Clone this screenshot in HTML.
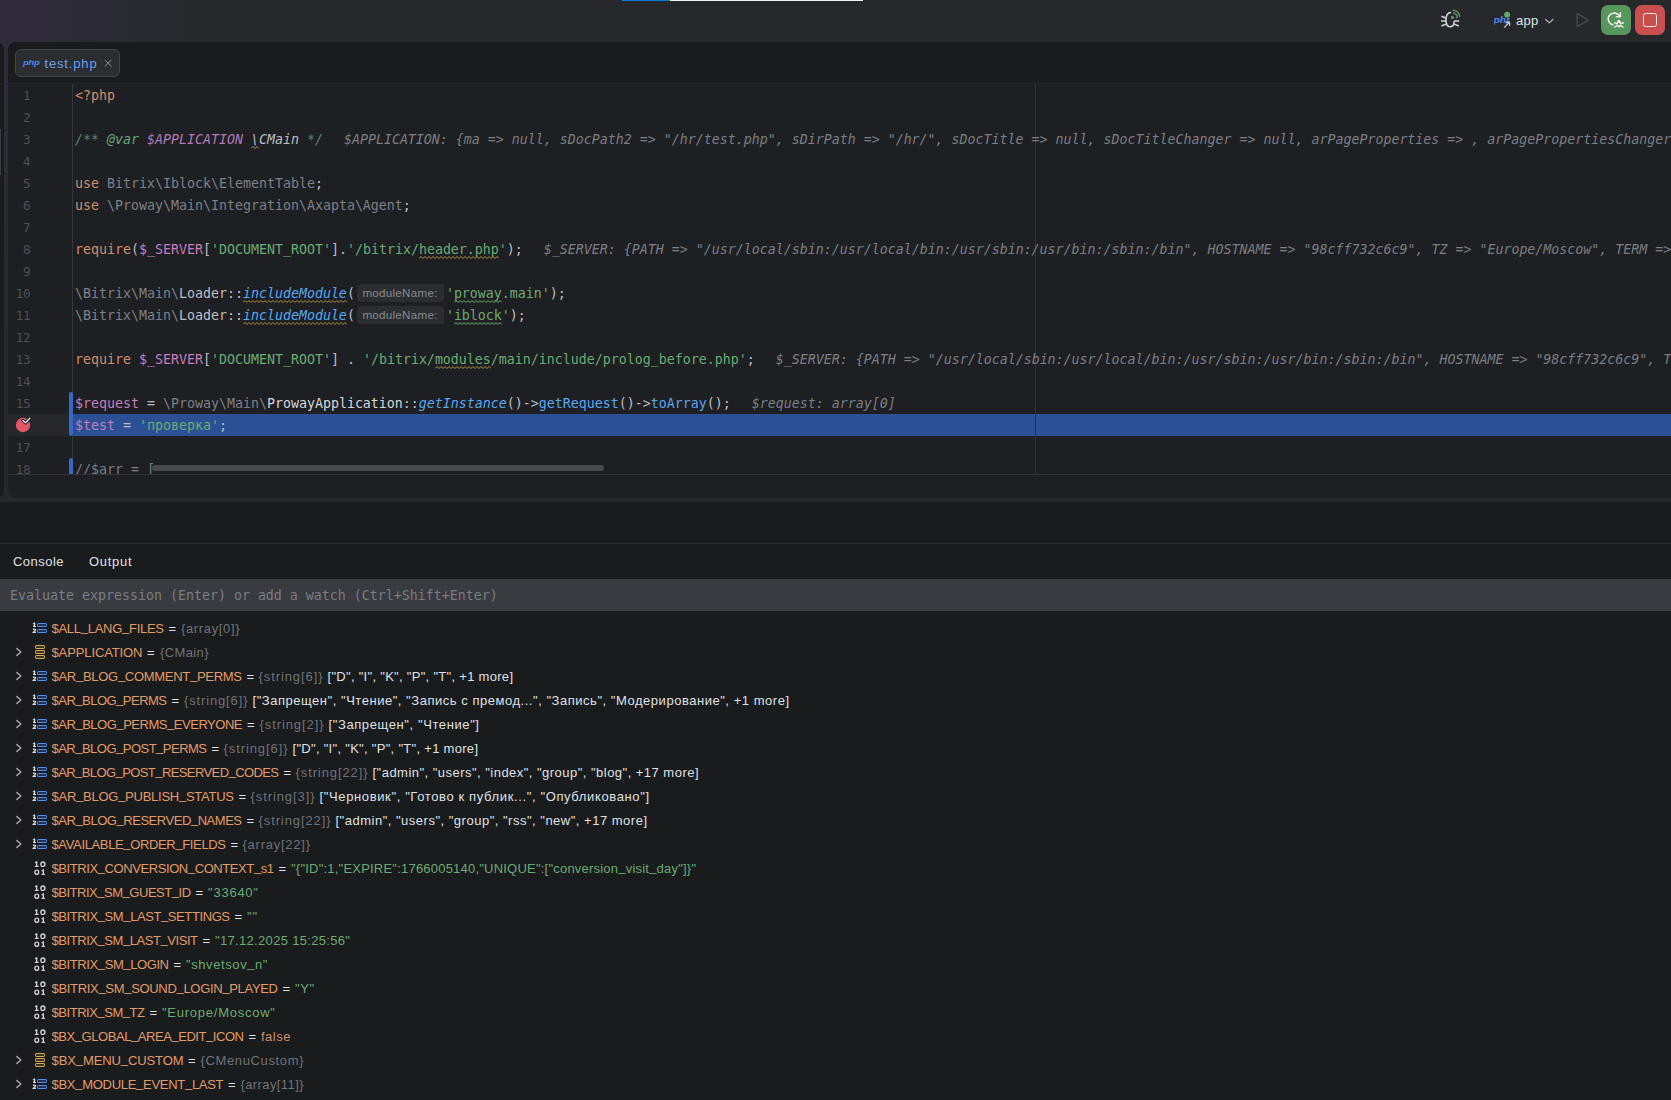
<!DOCTYPE html>
<html lang="ru">
<head>
<meta charset="utf-8">
<title>test.php</title>
<style>
html,body{margin:0;padding:0}
body{width:1671px;height:1100px;overflow:hidden;position:relative;background:#27282c;font-family:'Liberation Sans', 'DejaVu Sans', sans-serif;font-size:13px;color:#dfe1e5}
div,span,svg{box-sizing:border-box}
.abs{position:absolute}
/* top bar */
#topbar{position:absolute;left:0;top:0;width:1671px;height:502px;background:#27282c radial-gradient(ellipse 210px 440px at 0 0,#302b3c 0%,#2f2b3a 20%,#2b2a33 48%,#28292e 75%,#27282c 100%)}
#winbg{display:none}
#prog1{position:absolute;left:622px;top:0;width:48px;height:1px;background:#0a7be0}
#prog2{position:absolute;left:670px;top:0;width:193px;height:1px;background:#f4f4f4}
/* panels */
#lstrip{position:absolute;left:-6px;top:42px;width:9.6px;height:455.5px;background:#1a1b1d;border-radius:0 8px 8px 0}
#lthumb{position:absolute;left:0;top:129px;width:1px;height:46px;background:#3a3c42}
#lline{position:absolute;left:0;top:83px;width:3px;height:1px;background:#26282c}
#ed{position:absolute;left:8px;top:42px;width:1663px;height:455.5px;background:#1e1f22;border-radius:8px 0 0 8px;overflow:hidden}
#tabbar{position:absolute;left:0;top:0;width:100%;height:41px;background:#1a1b1d}
#tabline{position:absolute;left:0;top:41px;width:100%;height:1px;background:#26282c}
#tab{position:absolute;left:7px;top:7px;width:105px;height:28px;border:1px solid #43454a;border-radius:6px;background:#2b2d30}
#tabtxt{position:absolute;left:28.5px;top:5.5px;font-size:13px;color:#6a9fee;letter-spacing:.84px;white-space:nowrap}
#edline{position:absolute;left:0;top:432px;width:100%;height:1px;background:#313338}
/* code: coordinates are page-absolute via #code wrapper */
#code{position:absolute;left:0;top:1px;width:1671px;height:473px;overflow:hidden;font-family:'DejaVu Sans Mono', 'Liberation Mono', monospace;font-size:13.29px;line-height:22px;color:#bcbec4;white-space:pre}
.ln{position:absolute;left:8px;width:22.5px;height:22px;text-align:right;color:#4b5059;font-size:12.6px;letter-spacing:-.2px}
.cl_{position:absolute;left:75px;height:22px;white-space:pre}
.kw{color:#cf8e6d}.s{color:#6aab73}.v{color:#c77dbb}.un{color:#7d8087}.t{color:#bcbec4}
.cl{color:#d5d7dc}
.sm{color:#56a8f5;font-style:italic}.m{color:#56a8f5}
.dc{color:#5f826b;font-style:italic}.dt{color:#67a37c;font-style:italic}.dv{color:#b07bb5;font-style:italic}.dw{color:#bcbec4;font-style:italic}
.cm{color:#7a7e85}
.iv{color:#7b7e85;font-style:italic}
.gap{display:inline-block;width:21px}
.hint{display:inline-block;width:91px;height:22px;vertical-align:top;position:relative}
.hi{position:absolute;left:2px;top:1px;width:87px;height:17.5px;border-radius:4px;background:#2b2d30;color:#868a91;font-family:'Liberation Sans', 'DejaVu Sans', sans-serif;font-size:11.6px;line-height:17px;padding-left:5.5px;letter-spacing:.28px;font-style:normal}
.wy{text-decoration:underline wavy #857042;text-decoration-thickness:1px;text-underline-offset:3px;text-decoration-skip-ink:none}
.wg{text-decoration:underline wavy #5d9a5a;text-decoration-thickness:1px;text-underline-offset:3px;text-decoration-skip-ink:none}
.wv{text-decoration:underline wavy #9c8148;text-decoration-thickness:1px;text-underline-offset:3px;text-decoration-skip-ink:none}
#exec{position:absolute;left:72px;top:414px;width:1599px;height:22px;background:#2b5096}
#execg{position:absolute;left:8px;top:414px;width:61px;height:22px;background:#26282b}
#gutsep{position:absolute;left:72px;top:84px;width:1px;height:390px;background:#35373b}
#margin{position:absolute;left:1035px;top:84px;width:1px;height:390px;background:#313337}
.vcs{position:absolute;left:69px;width:3.5px;background:#3a66c4;border-radius:2px}
#hscroll{position:absolute;left:152px;top:465px;width:452px;height:6px;border-radius:3px;background:#48494c}
/* debug panel */
#dbg{position:absolute;left:0;top:502px;width:1671px;height:598px;background:#1a1b1d}
#dline{position:absolute;left:0;top:41px;width:100%;height:1px;background:#2a2c30}
.dtab{position:absolute;top:52px;font-size:13px;color:#dfe1e5;white-space:nowrap}
#evalbar{position:absolute;left:0;top:76.5px;width:100%;height:32.8px;background:#393b40}
#evaltxt{position:absolute;left:10px;top:.8px;height:33.5px;line-height:34px;font-family:'DejaVu Sans Mono', 'Liberation Mono', monospace;font-size:13.29px;color:#797d85;white-space:pre}
.row{position:absolute;left:0;width:1671px;height:24px;line-height:24px;white-space:nowrap}
.sg{position:absolute;top:1px;white-space:pre}
.nm{color:#e19c69}.eq{color:#dfe1e5}.ty{color:#6f737a}.vw{color:#dfe1e5}.vg{color:#6aab73}.vo{color:#cf8e6d}
.ic{position:absolute;left:32px;top:4px;width:16px;height:16px}
.chev{position:absolute;left:10.5px;top:4px;width:16px;height:16px}
.u{position:relative;top:-1.8px}.um{position:relative;top:-1.5px}
#s1{letter-spacing:-0.277px}
#s2{letter-spacing:0.637px}
#s3{letter-spacing:-0.112px}
#s4{letter-spacing:0.375px}
#s5{letter-spacing:-0.287px}
#s6{letter-spacing:0.906px}
#s7{letter-spacing:0.293px}
#s8{letter-spacing:-0.510px}
#s9{letter-spacing:0.856px}
#s10{letter-spacing:0.530px}
#s11{letter-spacing:-0.472px}
#s12{letter-spacing:0.906px}
#s13{letter-spacing:0.603px}
#s14{letter-spacing:-0.515px}
#s15{letter-spacing:0.906px}
#s16{letter-spacing:0.293px}
#s17{letter-spacing:-0.585px}
#s18{letter-spacing:0.895px}
#s19{letter-spacing:0.474px}
#s20{letter-spacing:-0.256px}
#s21{letter-spacing:0.906px}
#s22{letter-spacing:0.629px}
#s23{letter-spacing:-0.462px}
#s24{letter-spacing:0.895px}
#s25{letter-spacing:0.502px}
#s26{letter-spacing:-0.357px}
#s27{letter-spacing:0.750px}
#s28{letter-spacing:-0.414px}
#s29{letter-spacing:0.213px}
#s30{letter-spacing:-0.479px}
#s31{letter-spacing:0.768px}
#s32{letter-spacing:-0.407px}
#s33{letter-spacing:0.766px}
#s34{letter-spacing:-0.443px}
#s35{letter-spacing:0.324px}
#s36{letter-spacing:-0.404px}
#s37{letter-spacing:0.589px}
#s38{letter-spacing:-0.315px}
#s39{letter-spacing:0.547px}
#s40{letter-spacing:-0.457px}
#s41{letter-spacing:0.753px}
#s42{letter-spacing:-0.441px}
#s43{letter-spacing:0.508px}
#s44{letter-spacing:-0.103px}
#s45{letter-spacing:0.634px}
#s46{letter-spacing:-0.288px}
#s47{letter-spacing:0.397px}
</style>
</head>
<body>
<div id="topbar"></div>
<div id="winbg"></div>
<div id="prog1"></div><div id="prog2"></div>

<svg id="ic-listen" class="abs" style="left:1440px;top:9px" width="22" height="22" viewBox="0 0 22 22">
  <g fill="none" stroke="#d3d5db" stroke-width="1.55" stroke-linecap="butt" stroke-linejoin="round">
    <path d="M11.2 3.5 C7.8 3.1 6 6.4 6 10.8 C6 15.4 7.8 17.8 10.1 17.8 C12.4 17.8 14.2 15.6 14.2 12"/>
    <path d="M1 11.9 H6 M14.2 11.9 H19.2"/>
    <path d="M1.4 7.2 L6.4 9.2"/>
    <path d="M1.4 17 L6.6 14.9"/>
    <path d="M18.8 17 L13.7 14.9"/>
  </g>
  <circle cx="12.45" cy="8.4" r="1.55" fill="#57965c"/>
  <g fill="none" stroke="#57965c" stroke-width="1.5" stroke-linecap="round">
    <path d="M13.64 3.96 A4.6 4.6 0 0 1 17.03 8.8"/>
    <path d="M13.08 1.23 A7.2 7.2 0 0 1 19.58 7.4"/>
  </g>
</svg>
<span class="abs" id="rc-php" style="left:1493.5px;top:13.6px;font:italic bold 10.5px/12px 'Liberation Sans', 'DejaVu Sans', sans-serif;color:#4f86f0;letter-spacing:-.1px;width:16.5px;overflow:hidden;white-space:nowrap;transform:scaleY(.8)">php</span>
<svg class="abs" style="left:1500px;top:10px" width="14" height="20" viewBox="0 0 14 20">
  <rect x="2" y="7" width="10" height="7" fill="#28292d" opacity=".0"/>
  <circle cx="7.1" cy="4.7" r="3" fill="#5fad65"/>
  <path d="M4.1 17.6 L9.4 12.3 M5.6 12.1 H9.6 V16.1" fill="none" stroke="#ced0d6" stroke-width="1.15"/>
</svg>
<span class="abs" id="rc-app" style="left:1516px;top:12.8px;font-size:13px;line-height:16px;color:#dfe1e5;letter-spacing:.3px">app</span>
<svg class="abs" style="left:1543px;top:15px" width="12" height="12" viewBox="0 0 12 12"><path d="M2.7 4.5 L6.3 7.9 L9.9 4.5" fill="none" stroke="#b4b8bf" stroke-width="1.2" stroke-linecap="round" stroke-linejoin="round"/></svg>
<svg class="abs" style="left:1572px;top:10px" width="20" height="20" viewBox="0 0 20 20"><path d="M5.2 4.6 V15.6 Q5.2 16.6 6.1 16.1 L15.6 10.7 Q16.4 10.2 15.6 9.7 L6.1 4.1 Q5.2 3.6 5.2 4.6 Z" fill="none" stroke="#47494e" stroke-width="1.5" stroke-linejoin="round"/></svg>
<div class="abs" style="left:1601px;top:5px;width:30px;height:30px;border-radius:7px;background:#57965c"></div>
<svg class="abs" style="left:1606px;top:10px" width="20" height="20" viewBox="0 0 20 20">
  <g fill="none" stroke="#eef0ee" stroke-width="1.45" stroke-linecap="round" stroke-linejoin="round">
    <path d="M6.9 14.8 A6 6 0 1 1 13.6 6.3"/>
    <path d="M14.4 2.6 V6.7 H10.3"/>
    <path d="M8.5 12.8 L11 13.6 M17.4 12.8 L14.9 13.6 M8.8 17 L11 15.6 M17.1 17 L14.9 15.6"/>
  </g>
  <path d="M12.9 9.7 C11.4 9.9 10.8 11.6 10.8 13.6 C10.8 15.9 11.6 17.6 12.9 17.6 C14.2 17.6 15.1 15.9 15.1 13.6 C15.1 11.6 14.4 9.9 12.9 9.7 Z" fill="#eef0ee"/>
  <circle cx="12.9" cy="14.2" r="1.3" fill="#57965c"/>
</svg>
<div class="abs" style="left:1635px;top:5px;width:30px;height:30px;border-radius:7px;background:#c94f4f"></div>
<div class="abs" style="left:1643px;top:13px;width:14px;height:14px;border-radius:2.5px;border:1.5px solid #f3e9e9"></div>

<div id="lstrip"></div><div id="lline"></div><div id="lthumb"></div>
<div id="ed">
  <div id="tabbar"></div>
  <div id="tabline"></div>
  <div id="tab"><span id="tabphp" style="position:absolute;left:7px;top:6.6px;font:italic bold 9.5px/12px 'Liberation Sans', 'DejaVu Sans', sans-serif;color:#4f86f0;letter-spacing:-.25px;transform:scaleY(.82);transform-origin:50% 50%">php</span><span id="tabtxt">test.php</span><svg style="position:absolute;left:84px;top:5px" width="16" height="16" viewBox="0 0 16 16"><path d="M4.8 4.8 L11.5 11.5 M11.5 4.8 L4.8 11.5" stroke="#8b8e96" stroke-width="1" fill="none"/></svg></div>
  <div id="edline"></div>
</div>
<div id="execg"></div>
<div id="exec"></div>
<div id="gutsep"></div>
<div id="margin"></div>
<div class="vcs" style="top:392px;height:44px"></div>
<div class="vcs" style="top:458px;height:16px;border-radius:2px 2px 0 0"></div>
<div id="code">
<div class="ln" style="top:84px">1</div>
<div class="cl_" style="top:84px"><span class="kw">&lt;?php</span></div>
<div class="ln" style="top:106px">2</div>
<div class="ln" style="top:128px">3</div>
<div class="cl_" style="top:128px"><span class="dc">/** </span><span class="dt">@var</span><span class="dc"> </span><span class="dv">$APPLICATION</span><span class="dc"> </span><span class="dw">\</span><span class="dw">CMain</span><span class="dc"> */</span><span class="gap"></span><span class="iv">$APPLICATION: {ma =&gt; null, sDocPath2 =&gt; &quot;/hr/test.php&quot;, sDirPath =&gt; &quot;/hr/&quot;, sDocTitle =&gt; null, sDocTitleChanger =&gt; null, arPageProperties =&gt; , arPagePropertiesChanger =&gt; , arDirProperties =&gt; }</span></div>
<div class="ln" style="top:150px">4</div>
<div class="ln" style="top:172px">5</div>
<div class="cl_" style="top:172px"><span class="kw">use</span><span class="t"> </span><span class="un">Bitrix\Iblock\ElementTable</span><span class="t">;</span></div>
<div class="ln" style="top:194px">6</div>
<div class="cl_" style="top:194px"><span class="kw">use</span><span class="t"> </span><span class="un">\Proway\Main\Integration\Axapta\Agent</span><span class="t">;</span></div>
<div class="ln" style="top:216px">7</div>
<div class="ln" style="top:238px">8</div>
<div class="cl_" style="top:238px"><span class="kw">require</span><span class="t">(</span><span class="v">$<span class="um">_</span>SERVER</span><span class="t">[</span><span class="s">&#x27;DOCUMENT<span class="um">_</span>ROOT&#x27;</span><span class="t">].</span><span class="s">&#x27;/bitrix/</span><span class="s">header.php</span><span class="s">&#x27;</span><span class="t">);</span><span class="gap"></span><span class="iv">$<span class="um">_</span>SERVER: {PATH =&gt; &quot;/usr/local/sbin:/usr/local/bin:/usr/sbin:/usr/bin:/sbin:/bin&quot;, HOSTNAME =&gt; &quot;98cff732c6c9&quot;, TZ =&gt; &quot;Europe/Moscow&quot;, TERM =&gt; &quot;xterm&quot;}</span></div>
<div class="ln" style="top:260px">9</div>
<div class="ln" style="top:282px">10</div>
<div class="cl_" style="top:282px"><span class="un">\Bitrix\Main\</span><span class="t">Loader::</span><span class="sm">includeModule</span><span class="t">(</span><span class="hint"><span class="hi">moduleName:</span></span><span class="s">&#x27;</span><span class="s">proway</span><span class="s">.main&#x27;</span><span class="t">);</span></div>
<div class="ln" style="top:304px">11</div>
<div class="cl_" style="top:304px"><span class="un">\Bitrix\Main\</span><span class="t">Loader::</span><span class="sm">includeModule</span><span class="t">(</span><span class="hint"><span class="hi">moduleName:</span></span><span class="s">&#x27;</span><span class="s">iblock</span><span class="s">&#x27;</span><span class="t">);</span></div>
<div class="ln" style="top:326px">12</div>
<div class="ln" style="top:348px">13</div>
<div class="cl_" style="top:348px"><span class="kw">require</span><span class="t"> </span><span class="v">$<span class="um">_</span>SERVER</span><span class="t">[</span><span class="s">&#x27;DOCUMENT<span class="um">_</span>ROOT&#x27;</span><span class="t">] . </span><span class="s">&#x27;/bitrix/</span><span class="s">modules</span><span class="s">/main/include/prolog<span class="um">_</span>before.php&#x27;</span><span class="t">;</span><span class="gap"></span><span class="iv">$<span class="um">_</span>SERVER: {PATH =&gt; &quot;/usr/local/sbin:/usr/local/bin:/usr/sbin:/usr/bin:/sbin:/bin&quot;, HOSTNAME =&gt; &quot;98cff732c6c9&quot;, TZ =&gt; &quot;Europe/Moscow&quot;}</span></div>
<div class="ln" style="top:370px">14</div>
<div class="ln" style="top:392px">15</div>
<div class="cl_" style="top:392px"><span class="v">$request</span><span class="t"> = </span><span class="un">\Proway\Main\</span><span class="cl">ProwayApplication</span><span class="t">::</span><span class="sm">getInstance</span><span class="t">()-&gt;</span><span class="m">getRequest</span><span class="t">()-&gt;</span><span class="m">toArray</span><span class="t">();</span><span class="gap"></span><span class="iv">$request: array[0]</span></div>
<div class="cl_" style="top:414px"><span class="v">$test</span><span class="t"> = </span><span class="s">&#x27;проверка&#x27;</span><span class="t">;</span></div>
<div class="ln" style="top:436px">17</div>
<div class="ln" style="top:458px">18</div>
<div class="cl_" style="top:458px"><span class="cm">//$arr = [</span></div>

</div>
<svg class="abs" style="left:13px;top:415px" width="20" height="20" viewBox="0 0 20 20"><circle cx="10" cy="10" r="7.2" fill="#e55765"/><path d="M9.9 5.4 L12.5 7.8 L16.8 3.3" fill="none" stroke="#1e1f22" stroke-width="3.2" stroke-linecap="round" stroke-linejoin="round"/><path d="M9.9 5.4 L12.5 7.8 L16.8 3.3" fill="none" stroke="#e6e7ea" stroke-width="1.3" stroke-linecap="round" stroke-linejoin="round"/></svg>
<svg class="abs" style="left:251px;top:146px" width="8" height="3" viewBox="0 0 8 3"><polyline points="0,2.5 2,0.5 4,2.5 6,0.5 8,2.5" fill="none" stroke="#b2954e" stroke-width="1"/></svg>
<svg class="abs" style="left:419px;top:256px" width="80" height="3" viewBox="0 0 80 3"><polyline points="0,2.5 2,0.5 4,2.5 6,0.5 8,2.5 10,0.5 12,2.5 14,0.5 16,2.5 18,0.5 20,2.5 22,0.5 24,2.5 26,0.5 28,2.5 30,0.5 32,2.5 34,0.5 36,2.5 38,0.5 40,2.5 42,0.5 44,2.5 46,0.5 48,2.5 50,0.5 52,2.5 54,0.5 56,2.5 58,0.5 60,2.5 62,0.5 64,2.5 66,0.5 68,2.5 70,0.5 72,2.5 74,0.5 76,2.5 78,0.5 80,2.5" fill="none" stroke="#ad9049" stroke-width="1"/></svg>
<svg class="abs" style="left:243px;top:300px" width="104" height="3" viewBox="0 0 104 3"><polyline points="0,2.5 2,0.5 4,2.5 6,0.5 8,2.5 10,0.5 12,2.5 14,0.5 16,2.5 18,0.5 20,2.5 22,0.5 24,2.5 26,0.5 28,2.5 30,0.5 32,2.5 34,0.5 36,2.5 38,0.5 40,2.5 42,0.5 44,2.5 46,0.5 48,2.5 50,0.5 52,2.5 54,0.5 56,2.5 58,0.5 60,2.5 62,0.5 64,2.5 66,0.5 68,2.5 70,0.5 72,2.5 74,0.5 76,2.5 78,0.5 80,2.5 82,0.5 84,2.5 86,0.5 88,2.5 90,0.5 92,2.5 94,0.5 96,2.5 98,0.5 100,2.5 102,0.5 104,2.5" fill="none" stroke="#ad9049" stroke-width="1"/></svg>
<svg class="abs" style="left:454px;top:300px" width="48" height="3" viewBox="0 0 48 3"><polyline points="0,2.5 2,0.5 4,2.5 6,0.5 8,2.5 10,0.5 12,2.5 14,0.5 16,2.5 18,0.5 20,2.5 22,0.5 24,2.5 26,0.5 28,2.5 30,0.5 32,2.5 34,0.5 36,2.5 38,0.5 40,2.5 42,0.5 44,2.5 46,0.5 48,2.5" fill="none" stroke="#68b36e" stroke-width="1"/></svg>
<svg class="abs" style="left:243px;top:322px" width="104" height="3" viewBox="0 0 104 3"><polyline points="0,2.5 2,0.5 4,2.5 6,0.5 8,2.5 10,0.5 12,2.5 14,0.5 16,2.5 18,0.5 20,2.5 22,0.5 24,2.5 26,0.5 28,2.5 30,0.5 32,2.5 34,0.5 36,2.5 38,0.5 40,2.5 42,0.5 44,2.5 46,0.5 48,2.5 50,0.5 52,2.5 54,0.5 56,2.5 58,0.5 60,2.5 62,0.5 64,2.5 66,0.5 68,2.5 70,0.5 72,2.5 74,0.5 76,2.5 78,0.5 80,2.5 82,0.5 84,2.5 86,0.5 88,2.5 90,0.5 92,2.5 94,0.5 96,2.5 98,0.5 100,2.5 102,0.5 104,2.5" fill="none" stroke="#ad9049" stroke-width="1"/></svg>
<svg class="abs" style="left:454px;top:322px" width="48" height="3" viewBox="0 0 48 3"><polyline points="0,2.5 2,0.5 4,2.5 6,0.5 8,2.5 10,0.5 12,2.5 14,0.5 16,2.5 18,0.5 20,2.5 22,0.5 24,2.5 26,0.5 28,2.5 30,0.5 32,2.5 34,0.5 36,2.5 38,0.5 40,2.5 42,0.5 44,2.5 46,0.5 48,2.5" fill="none" stroke="#68b36e" stroke-width="1"/></svg>
<svg class="abs" style="left:435px;top:366px" width="56" height="3" viewBox="0 0 56 3"><polyline points="0,2.5 2,0.5 4,2.5 6,0.5 8,2.5 10,0.5 12,2.5 14,0.5 16,2.5 18,0.5 20,2.5 22,0.5 24,2.5 26,0.5 28,2.5 30,0.5 32,2.5 34,0.5 36,2.5 38,0.5 40,2.5 42,0.5 44,2.5 46,0.5 48,2.5 50,0.5 52,2.5 54,0.5 56,2.5" fill="none" stroke="#ad9049" stroke-width="1"/></svg>
<div id="hscroll"></div>
<div id="dbg">
  <div id="dline"></div>
  <span class="dtab" id="t1" style="left:13px;letter-spacing:.48px">Console</span>
  <span class="dtab" id="t2" style="left:89px;letter-spacing:.72px">Output</span>
  <div id="evalbar"><span id="evaltxt">Evaluate expression (Enter) or add a watch (Ctrl+Shift+Enter)</span></div>
</div>
<div id="rows">
<div class="row" style="top:616px"><svg class="ic" viewBox="0 0 16 16"><rect x="5.5" y="3.5" width="9" height="3" rx="0.6" fill="#25324d" stroke="#548af7"/><rect x="5.5" y="9.5" width="9" height="3" rx="0.6" fill="#25324d" stroke="#548af7"/><path d="M1.1 4.1 L2.5 3.1 V6.6 M1 6.4 H3.9" fill="none" stroke="#dcdee3" stroke-width="1.25"/><path d="M1.2 9.9 C1.3 8.7 3.6 8.7 3.5 10 C3.5 10.9 1.9 11.4 1.3 12.4 H3.9" fill="none" stroke="#dcdee3" stroke-width="1.25"/></svg><span id="s1" class="sg nm" style="left:51.5px">$ALL<span class="u">_</span>LANG<span class="u">_</span>FILES</span><span class="sg eq" style="left:168.6px">=</span><span id="s2" class="sg ty" style="left:181px">{array[0]}</span></div>
<div class="row" style="top:640px"><svg class="chev" viewBox="0 0 16 16"><path d="M5.9 4.6 L9.9 8 L5.9 11.4" fill="none" stroke="#9da0a8" stroke-width="1.5" stroke-linecap="round" stroke-linejoin="round"/></svg><svg class="ic" viewBox="0 0 16 16"><rect x="3.5" y="1.5" width="9" height="3" rx="0.6" fill="#3d3223" stroke="#d6ae58"/><rect x="3.5" y="6.5" width="9" height="3" rx="0.6" fill="#3d3223" stroke="#d6ae58"/><rect x="3.5" y="11.5" width="9" height="3" rx="0.6" fill="#3d3223" stroke="#d6ae58"/></svg><span id="s3" class="sg nm" style="left:51.5px">$APPLICATION</span><span class="sg eq" style="left:147.1px">=</span><span id="s4" class="sg ty" style="left:160px">{CMain}</span></div>
<div class="row" style="top:664px"><svg class="chev" viewBox="0 0 16 16"><path d="M5.9 4.6 L9.9 8 L5.9 11.4" fill="none" stroke="#9da0a8" stroke-width="1.5" stroke-linecap="round" stroke-linejoin="round"/></svg><svg class="ic" viewBox="0 0 16 16"><rect x="5.5" y="3.5" width="9" height="3" rx="0.6" fill="#25324d" stroke="#548af7"/><rect x="5.5" y="9.5" width="9" height="3" rx="0.6" fill="#25324d" stroke="#548af7"/><path d="M1.1 4.1 L2.5 3.1 V6.6 M1 6.4 H3.9" fill="none" stroke="#dcdee3" stroke-width="1.25"/><path d="M1.2 9.9 C1.3 8.7 3.6 8.7 3.5 10 C3.5 10.9 1.9 11.4 1.3 12.4 H3.9" fill="none" stroke="#dcdee3" stroke-width="1.25"/></svg><span id="s5" class="sg nm" style="left:51.5px">$AR<span class="u">_</span>BLOG<span class="u">_</span>COMMENT<span class="u">_</span>PERMS</span><span class="sg eq" style="left:246.6px">=</span><span id="s6" class="sg ty" style="left:258.5px">{string[6]}</span><span id="s7" class="sg vw" style="left:327.5px">["D", "I", "K", "P", "T", +1 more]</span></div>
<div class="row" style="top:688px"><svg class="chev" viewBox="0 0 16 16"><path d="M5.9 4.6 L9.9 8 L5.9 11.4" fill="none" stroke="#9da0a8" stroke-width="1.5" stroke-linecap="round" stroke-linejoin="round"/></svg><svg class="ic" viewBox="0 0 16 16"><rect x="5.5" y="3.5" width="9" height="3" rx="0.6" fill="#25324d" stroke="#548af7"/><rect x="5.5" y="9.5" width="9" height="3" rx="0.6" fill="#25324d" stroke="#548af7"/><path d="M1.1 4.1 L2.5 3.1 V6.6 M1 6.4 H3.9" fill="none" stroke="#dcdee3" stroke-width="1.25"/><path d="M1.2 9.9 C1.3 8.7 3.6 8.7 3.5 10 C3.5 10.9 1.9 11.4 1.3 12.4 H3.9" fill="none" stroke="#dcdee3" stroke-width="1.25"/></svg><span id="s8" class="sg nm" style="left:51.5px">$AR<span class="u">_</span>BLOG<span class="u">_</span>PERMS</span><span class="sg eq" style="left:171.6px">=</span><span id="s9" class="sg ty" style="left:184px">{string[6]}</span><span id="s10" class="sg vw" style="left:252.5px">["Запрещен", "Чтение", "Запись с премод...", "Запись", "Модерирование", +1 more]</span></div>
<div class="row" style="top:712px"><svg class="chev" viewBox="0 0 16 16"><path d="M5.9 4.6 L9.9 8 L5.9 11.4" fill="none" stroke="#9da0a8" stroke-width="1.5" stroke-linecap="round" stroke-linejoin="round"/></svg><svg class="ic" viewBox="0 0 16 16"><rect x="5.5" y="3.5" width="9" height="3" rx="0.6" fill="#25324d" stroke="#548af7"/><rect x="5.5" y="9.5" width="9" height="3" rx="0.6" fill="#25324d" stroke="#548af7"/><path d="M1.1 4.1 L2.5 3.1 V6.6 M1 6.4 H3.9" fill="none" stroke="#dcdee3" stroke-width="1.25"/><path d="M1.2 9.9 C1.3 8.7 3.6 8.7 3.5 10 C3.5 10.9 1.9 11.4 1.3 12.4 H3.9" fill="none" stroke="#dcdee3" stroke-width="1.25"/></svg><span id="s11" class="sg nm" style="left:51.5px">$AR<span class="u">_</span>BLOG<span class="u">_</span>PERMS<span class="u">_</span>EVERYONE</span><span class="sg eq" style="left:247.1px">=</span><span id="s12" class="sg ty" style="left:259.5px">{string[2]}</span><span id="s13" class="sg vw" style="left:328.5px">["Запрещен", "Чтение"]</span></div>
<div class="row" style="top:736px"><svg class="chev" viewBox="0 0 16 16"><path d="M5.9 4.6 L9.9 8 L5.9 11.4" fill="none" stroke="#9da0a8" stroke-width="1.5" stroke-linecap="round" stroke-linejoin="round"/></svg><svg class="ic" viewBox="0 0 16 16"><rect x="5.5" y="3.5" width="9" height="3" rx="0.6" fill="#25324d" stroke="#548af7"/><rect x="5.5" y="9.5" width="9" height="3" rx="0.6" fill="#25324d" stroke="#548af7"/><path d="M1.1 4.1 L2.5 3.1 V6.6 M1 6.4 H3.9" fill="none" stroke="#dcdee3" stroke-width="1.25"/><path d="M1.2 9.9 C1.3 8.7 3.6 8.7 3.5 10 C3.5 10.9 1.9 11.4 1.3 12.4 H3.9" fill="none" stroke="#dcdee3" stroke-width="1.25"/></svg><span id="s14" class="sg nm" style="left:51.5px">$AR<span class="u">_</span>BLOG<span class="u">_</span>POST<span class="u">_</span>PERMS</span><span class="sg eq" style="left:211.6px">=</span><span id="s15" class="sg ty" style="left:223.5px">{string[6]}</span><span id="s16" class="sg vw" style="left:292.5px">["D", "I", "K", "P", "T", +1 more]</span></div>
<div class="row" style="top:760px"><svg class="chev" viewBox="0 0 16 16"><path d="M5.9 4.6 L9.9 8 L5.9 11.4" fill="none" stroke="#9da0a8" stroke-width="1.5" stroke-linecap="round" stroke-linejoin="round"/></svg><svg class="ic" viewBox="0 0 16 16"><rect x="5.5" y="3.5" width="9" height="3" rx="0.6" fill="#25324d" stroke="#548af7"/><rect x="5.5" y="9.5" width="9" height="3" rx="0.6" fill="#25324d" stroke="#548af7"/><path d="M1.1 4.1 L2.5 3.1 V6.6 M1 6.4 H3.9" fill="none" stroke="#dcdee3" stroke-width="1.25"/><path d="M1.2 9.9 C1.3 8.7 3.6 8.7 3.5 10 C3.5 10.9 1.9 11.4 1.3 12.4 H3.9" fill="none" stroke="#dcdee3" stroke-width="1.25"/></svg><span id="s17" class="sg nm" style="left:51.5px">$AR<span class="u">_</span>BLOG<span class="u">_</span>POST<span class="u">_</span>RESERVED<span class="u">_</span>CODES</span><span class="sg eq" style="left:283.6px">=</span><span id="s18" class="sg ty" style="left:295.5px">{string[22]}</span><span id="s19" class="sg vw" style="left:372.5px">["admin", "users", "index", "group", "blog", +17 more]</span></div>
<div class="row" style="top:784px"><svg class="chev" viewBox="0 0 16 16"><path d="M5.9 4.6 L9.9 8 L5.9 11.4" fill="none" stroke="#9da0a8" stroke-width="1.5" stroke-linecap="round" stroke-linejoin="round"/></svg><svg class="ic" viewBox="0 0 16 16"><rect x="5.5" y="3.5" width="9" height="3" rx="0.6" fill="#25324d" stroke="#548af7"/><rect x="5.5" y="9.5" width="9" height="3" rx="0.6" fill="#25324d" stroke="#548af7"/><path d="M1.1 4.1 L2.5 3.1 V6.6 M1 6.4 H3.9" fill="none" stroke="#dcdee3" stroke-width="1.25"/><path d="M1.2 9.9 C1.3 8.7 3.6 8.7 3.5 10 C3.5 10.9 1.9 11.4 1.3 12.4 H3.9" fill="none" stroke="#dcdee3" stroke-width="1.25"/></svg><span id="s20" class="sg nm" style="left:51.5px">$AR<span class="u">_</span>BLOG<span class="u">_</span>PUBLISH<span class="u">_</span>STATUS</span><span class="sg eq" style="left:238.6px">=</span><span id="s21" class="sg ty" style="left:250.5px">{string[3]}</span><span id="s22" class="sg vw" style="left:319.5px">["Черновик", "Готово к публик...", "Опубликовано"]</span></div>
<div class="row" style="top:808px"><svg class="chev" viewBox="0 0 16 16"><path d="M5.9 4.6 L9.9 8 L5.9 11.4" fill="none" stroke="#9da0a8" stroke-width="1.5" stroke-linecap="round" stroke-linejoin="round"/></svg><svg class="ic" viewBox="0 0 16 16"><rect x="5.5" y="3.5" width="9" height="3" rx="0.6" fill="#25324d" stroke="#548af7"/><rect x="5.5" y="9.5" width="9" height="3" rx="0.6" fill="#25324d" stroke="#548af7"/><path d="M1.1 4.1 L2.5 3.1 V6.6 M1 6.4 H3.9" fill="none" stroke="#dcdee3" stroke-width="1.25"/><path d="M1.2 9.9 C1.3 8.7 3.6 8.7 3.5 10 C3.5 10.9 1.9 11.4 1.3 12.4 H3.9" fill="none" stroke="#dcdee3" stroke-width="1.25"/></svg><span id="s23" class="sg nm" style="left:51.5px">$AR<span class="u">_</span>BLOG<span class="u">_</span>RESERVED<span class="u">_</span>NAMES</span><span class="sg eq" style="left:246.6px">=</span><span id="s24" class="sg ty" style="left:258.5px">{string[22]}</span><span id="s25" class="sg vw" style="left:335.5px">["admin", "users", "group", "rss", "new", +17 more]</span></div>
<div class="row" style="top:832px"><svg class="chev" viewBox="0 0 16 16"><path d="M5.9 4.6 L9.9 8 L5.9 11.4" fill="none" stroke="#9da0a8" stroke-width="1.5" stroke-linecap="round" stroke-linejoin="round"/></svg><svg class="ic" viewBox="0 0 16 16"><rect x="5.5" y="3.5" width="9" height="3" rx="0.6" fill="#25324d" stroke="#548af7"/><rect x="5.5" y="9.5" width="9" height="3" rx="0.6" fill="#25324d" stroke="#548af7"/><path d="M1.1 4.1 L2.5 3.1 V6.6 M1 6.4 H3.9" fill="none" stroke="#dcdee3" stroke-width="1.25"/><path d="M1.2 9.9 C1.3 8.7 3.6 8.7 3.5 10 C3.5 10.9 1.9 11.4 1.3 12.4 H3.9" fill="none" stroke="#dcdee3" stroke-width="1.25"/></svg><span id="s26" class="sg nm" style="left:51.5px">$AVAILABLE<span class="u">_</span>ORDER<span class="u">_</span>FIELDS</span><span class="sg eq" style="left:230.6px">=</span><span id="s27" class="sg ty" style="left:242.5px">{array[22]}</span></div>
<div class="row" style="top:856px"><svg class="ic" viewBox="0 0 16 16"><g fill="none" stroke="#ced0d6" stroke-width="1.35"><path d="M3.1 2.9 L4.7 1.9 V6.4 M2.9 6.3 H6.5"/><ellipse cx="10.9" cy="4.15" rx="2" ry="2.2"/><ellipse cx="4.8" cy="12.2" rx="1.9" ry="2.15"/><path d="M9.7 11 L11.3 10 V14.4 M9.5 14.3 H13.1"/></g></svg><span id="s28" class="sg nm" style="left:51.5px">$BITRIX<span class="u">_</span>CONVERSION<span class="u">_</span>CONTEXT<span class="u">_</span>s1</span><span class="sg eq" style="left:278.6px">=</span><span id="s29" class="sg vg" style="left:291px">"{"ID":1,"EXPIRE":1766005140,"UNIQUE":["conversion<span class="u">_</span>visit<span class="u">_</span>day"]}"</span></div>
<div class="row" style="top:880px"><svg class="ic" viewBox="0 0 16 16"><g fill="none" stroke="#ced0d6" stroke-width="1.35"><path d="M3.1 2.9 L4.7 1.9 V6.4 M2.9 6.3 H6.5"/><ellipse cx="10.9" cy="4.15" rx="2" ry="2.2"/><ellipse cx="4.8" cy="12.2" rx="1.9" ry="2.15"/><path d="M9.7 11 L11.3 10 V14.4 M9.5 14.3 H13.1"/></g></svg><span id="s30" class="sg nm" style="left:51.5px">$BITRIX<span class="u">_</span>SM<span class="u">_</span>GUEST<span class="u">_</span>ID</span><span class="sg eq" style="left:195.6px">=</span><span id="s31" class="sg vg" style="left:208px">"33640"</span></div>
<div class="row" style="top:904px"><svg class="ic" viewBox="0 0 16 16"><g fill="none" stroke="#ced0d6" stroke-width="1.35"><path d="M3.1 2.9 L4.7 1.9 V6.4 M2.9 6.3 H6.5"/><ellipse cx="10.9" cy="4.15" rx="2" ry="2.2"/><ellipse cx="4.8" cy="12.2" rx="1.9" ry="2.15"/><path d="M9.7 11 L11.3 10 V14.4 M9.5 14.3 H13.1"/></g></svg><span id="s32" class="sg nm" style="left:51.5px">$BITRIX<span class="u">_</span>SM<span class="u">_</span>LAST<span class="u">_</span>SETTINGS</span><span class="sg eq" style="left:234.6px">=</span><span id="s33" class="sg vg" style="left:247px">""</span></div>
<div class="row" style="top:928px"><svg class="ic" viewBox="0 0 16 16"><g fill="none" stroke="#ced0d6" stroke-width="1.35"><path d="M3.1 2.9 L4.7 1.9 V6.4 M2.9 6.3 H6.5"/><ellipse cx="10.9" cy="4.15" rx="2" ry="2.2"/><ellipse cx="4.8" cy="12.2" rx="1.9" ry="2.15"/><path d="M9.7 11 L11.3 10 V14.4 M9.5 14.3 H13.1"/></g></svg><span id="s34" class="sg nm" style="left:51.5px">$BITRIX<span class="u">_</span>SM<span class="u">_</span>LAST<span class="u">_</span>VISIT</span><span class="sg eq" style="left:202.6px">=</span><span id="s35" class="sg vg" style="left:215px">"17.12.2025 15:25:56"</span></div>
<div class="row" style="top:952px"><svg class="ic" viewBox="0 0 16 16"><g fill="none" stroke="#ced0d6" stroke-width="1.35"><path d="M3.1 2.9 L4.7 1.9 V6.4 M2.9 6.3 H6.5"/><ellipse cx="10.9" cy="4.15" rx="2" ry="2.2"/><ellipse cx="4.8" cy="12.2" rx="1.9" ry="2.15"/><path d="M9.7 11 L11.3 10 V14.4 M9.5 14.3 H13.1"/></g></svg><span id="s36" class="sg nm" style="left:51.5px">$BITRIX<span class="u">_</span>SM<span class="u">_</span>LOGIN</span><span class="sg eq" style="left:173.6px">=</span><span id="s37" class="sg vg" style="left:186px">"shvetsov<span class="u">_</span>n"</span></div>
<div class="row" style="top:976px"><svg class="ic" viewBox="0 0 16 16"><g fill="none" stroke="#ced0d6" stroke-width="1.35"><path d="M3.1 2.9 L4.7 1.9 V6.4 M2.9 6.3 H6.5"/><ellipse cx="10.9" cy="4.15" rx="2" ry="2.2"/><ellipse cx="4.8" cy="12.2" rx="1.9" ry="2.15"/><path d="M9.7 11 L11.3 10 V14.4 M9.5 14.3 H13.1"/></g></svg><span id="s38" class="sg nm" style="left:51.5px">$BITRIX<span class="u">_</span>SM<span class="u">_</span>SOUND<span class="u">_</span>LOGIN<span class="u">_</span>PLAYED</span><span class="sg eq" style="left:282.6px">=</span><span id="s39" class="sg vg" style="left:295px">"Y"</span></div>
<div class="row" style="top:1000px"><svg class="ic" viewBox="0 0 16 16"><g fill="none" stroke="#ced0d6" stroke-width="1.35"><path d="M3.1 2.9 L4.7 1.9 V6.4 M2.9 6.3 H6.5"/><ellipse cx="10.9" cy="4.15" rx="2" ry="2.2"/><ellipse cx="4.8" cy="12.2" rx="1.9" ry="2.15"/><path d="M9.7 11 L11.3 10 V14.4 M9.5 14.3 H13.1"/></g></svg><span id="s40" class="sg nm" style="left:51.5px">$BITRIX<span class="u">_</span>SM<span class="u">_</span>TZ</span><span class="sg eq" style="left:149.6px">=</span><span id="s41" class="sg vg" style="left:162px">"Europe/Moscow"</span></div>
<div class="row" style="top:1024px"><svg class="ic" viewBox="0 0 16 16"><g fill="none" stroke="#ced0d6" stroke-width="1.35"><path d="M3.1 2.9 L4.7 1.9 V6.4 M2.9 6.3 H6.5"/><ellipse cx="10.9" cy="4.15" rx="2" ry="2.2"/><ellipse cx="4.8" cy="12.2" rx="1.9" ry="2.15"/><path d="M9.7 11 L11.3 10 V14.4 M9.5 14.3 H13.1"/></g></svg><span id="s42" class="sg nm" style="left:51.5px">$BX<span class="u">_</span>GLOBAL<span class="u">_</span>AREA<span class="u">_</span>EDIT<span class="u">_</span>ICON</span><span class="sg eq" style="left:248.6px">=</span><span id="s43" class="sg vo" style="left:261px">false</span></div>
<div class="row" style="top:1048px"><svg class="chev" viewBox="0 0 16 16"><path d="M5.9 4.6 L9.9 8 L5.9 11.4" fill="none" stroke="#9da0a8" stroke-width="1.5" stroke-linecap="round" stroke-linejoin="round"/></svg><svg class="ic" viewBox="0 0 16 16"><rect x="3.5" y="1.5" width="9" height="3" rx="0.6" fill="#3d3223" stroke="#d6ae58"/><rect x="3.5" y="6.5" width="9" height="3" rx="0.6" fill="#3d3223" stroke="#d6ae58"/><rect x="3.5" y="11.5" width="9" height="3" rx="0.6" fill="#3d3223" stroke="#d6ae58"/></svg><span id="s44" class="sg nm" style="left:51.5px">$BX<span class="u">_</span>MENU<span class="u">_</span>CUSTOM</span><span class="sg eq" style="left:188.1px">=</span><span id="s45" class="sg ty" style="left:200.5px">{CMenuCustom}</span></div>
<div class="row" style="top:1072px"><svg class="chev" viewBox="0 0 16 16"><path d="M5.9 4.6 L9.9 8 L5.9 11.4" fill="none" stroke="#9da0a8" stroke-width="1.5" stroke-linecap="round" stroke-linejoin="round"/></svg><svg class="ic" viewBox="0 0 16 16"><rect x="5.5" y="3.5" width="9" height="3" rx="0.6" fill="#25324d" stroke="#548af7"/><rect x="5.5" y="9.5" width="9" height="3" rx="0.6" fill="#25324d" stroke="#548af7"/><path d="M1.1 4.1 L2.5 3.1 V6.6 M1 6.4 H3.9" fill="none" stroke="#dcdee3" stroke-width="1.25"/><path d="M1.2 9.9 C1.3 8.7 3.6 8.7 3.5 10 C3.5 10.9 1.9 11.4 1.3 12.4 H3.9" fill="none" stroke="#dcdee3" stroke-width="1.25"/></svg><span id="s46" class="sg nm" style="left:51.5px">$BX<span class="u">_</span>MODULE<span class="u">_</span>EVENT<span class="u">_</span>LAST</span><span class="sg eq" style="left:228.1px">=</span><span id="s47" class="sg ty" style="left:240.5px">{array[11]}</span></div>
</div>
</body>
</html>
